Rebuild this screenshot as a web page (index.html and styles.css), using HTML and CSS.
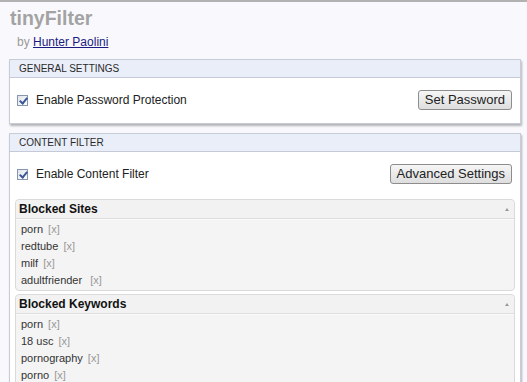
FILE: index.html
```html
<!DOCTYPE html>
<html>
<head>
<meta charset="utf-8">
<link rel="stylesheet" href="styles.css">
</head>
<body>
<div class="top">
  <h1 class="title">tinyFilter</h1>
  <div class="byline">by <a href="#">Hunter Paolini</a></div>
</div>

<section class="panel">
  <div class="panel-head">GENERAL SETTINGS</div>
  <div class="panel-body row">
    <label class="check"><span class="box"></span>Enable Password Protection</label>
    <button class="btn">Set Password</button>
  </div>
</section>

<section class="panel panel2">
  <div class="panel-head">CONTENT FILTER</div>
  <div class="panel-body">
    <div class="row">
      <label class="check"><span class="box"></span>Enable Content Filter</label>
      <button class="btn">Advanced Settings</button>
    </div>
    <div class="list">
      <div class="list-head">Blocked Sites<span class="arrow"></span></div>
      <ul class="items">
        <li>porn <span class="x">[x]</span></li>
        <li>redtube <span class="x">[x]</span></li>
        <li>milf <span class="x">[x]</span></li>
        <li>adultfriender&nbsp; <span class="x">[x]</span></li>
      </ul>
    </div>
    <div class="list">
      <div class="list-head">Blocked Keywords<span class="arrow"></span></div>
      <ul class="items">
        <li>porn <span class="x">[x]</span></li>
        <li>18 usc <span class="x">[x]</span></li>
        <li>pornography <span class="x">[x]</span></li>
        <li>porno <span class="x">[x]</span></li>
      </ul>
    </div>
  </div>
</section>
</body>
</html>
```

FILE: styles.css
```css
html, body {
  margin: 0;
  padding: 0;
}
body {
  background: #f9f9fd;
  border-top: 2px solid #b2b2b2;
  font-family: "Liberation Sans", Arial, sans-serif;
  color: #222;
  height: 380px;
  overflow: hidden;
}
.top {
  padding: 4px 0 0 10px;
  height: 53px;
  box-sizing: border-box;
}
.title {
  margin: 0;
  font-size: 19.5px;
  line-height: 24px;
  font-weight: bold;
  color: #a3a3a3;
}
.byline {
  margin: 5px 0 0 7px;
  font-size: 12px;
  line-height: 14px;
  color: #999;
}
.byline a {
  color: #1a1a80;
  text-decoration: underline;
}
.panel {
  margin: 4px 6px 0 9px;
  border: 1px solid #c6ccd8;
  background: #fff;
  box-shadow: 1px 2px 2px rgba(0, 0, 0, 0.28);
}
.panel2 {
  margin-top: 9px;
}
.panel-head {
  height: 17px;
  line-height: 17px;
  background: #e9eef9;
  border-bottom: 1px solid #c4cad8;
  padding-left: 9px;
  font-size: 10px;
  color: #2a2a2a;
}
.panel-body {
  background: #fff;
}
.row {
  display: flex;
  align-items: center;
  justify-content: space-between;
  padding: 12px 8px 13px 7px;
}
.panel2 .panel-body {
  padding: 0 5px 4px 5px;
}
.panel2 .row {
  padding: 12px 3px 15px 2px;
}
.check {
  display: flex;
  align-items: center;
  font-size: 12px;
  color: #222;
}
.box {
  width: 11px;
  height: 11px;
  box-sizing: border-box;
  border: 1px solid #8796ae;
  background: linear-gradient(135deg, #dfe4ec, #fff);
  margin-right: 8px;
  position: relative;
}
.box::after {
  content: "";
  position: absolute;
  left: 3px;
  top: 0px;
  width: 3px;
  height: 6px;
  border: solid #3a5893;
  border-width: 0 2px 2px 0;
  transform: rotate(40deg);
}
.btn {
  font-family: "Liberation Sans", Arial, sans-serif;
  font-size: 13px;
  color: #222;
  height: 20px;
  padding: 0 6px;
  border: 1px solid #8d8d8d;
  border-radius: 3px;
  background: linear-gradient(#f6f6f6, #dedede);
  line-height: 18px;
}
.list {
  border: 1px solid #dadada;
  border-radius: 4px;
  background: #f4f4f4;
  margin-bottom: 3px;
}
.list-head {
  height: 18px;
  line-height: 19px;
  padding-left: 3px;
  font-size: 12px;
  font-weight: bold;
  color: #111;
  background: #f2f2f2;
  border-bottom: 1px solid #dedede;
  box-shadow: 0 1px 0 #fbfbfb;
  position: relative;
  border-radius: 4px 4px 0 0;
}
.arrow {
  position: absolute;
  right: 5px;
  top: 8px;
  width: 0;
  height: 0;
  border-left: 2px solid transparent;
  border-right: 2px solid transparent;
  border-bottom: 3px solid #9a9a9a;
}
.items {
  list-style: none;
  margin: 0;
  padding: 2px 0 1px 5px;
}
.items li {
  font-size: 11px;
  line-height: 17px;
  height: 17px;
  color: #333;
}
.x {
  color: #999;
  margin-left: 2px;
}
```
